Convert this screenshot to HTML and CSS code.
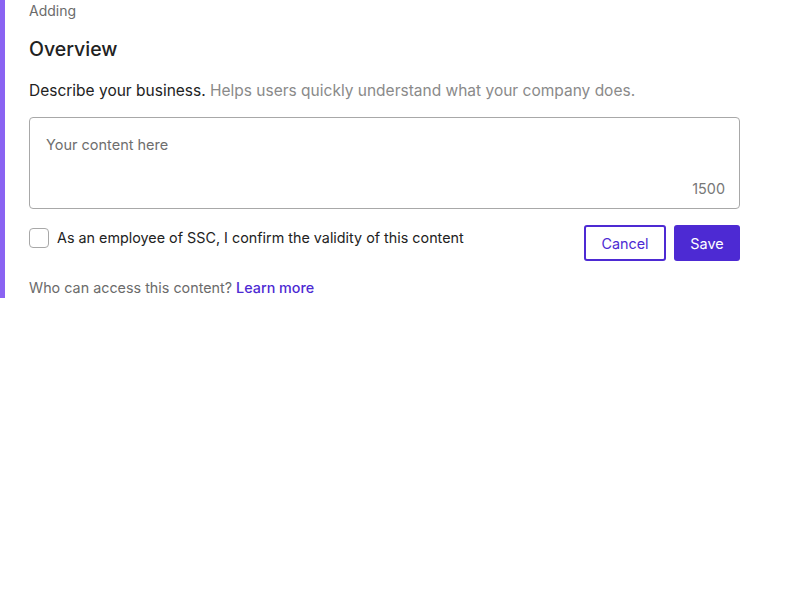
FILE: index.html
```html
<!DOCTYPE html>
<html>
<head>
<meta charset="utf-8">
<link rel="stylesheet" href="styles.css">
</head>
<body>
<div class="panel">
  <div class="status">Adding</div>
  <h2 class="title">Overview</h2>
  <p class="desc"><span class="desc-main">Describe your business.</span> <span class="desc-help">Helps users quickly understand what your company does.</span></p>
  <div class="field">
    <div class="placeholder">Your content here</div>
    <div class="counter">1500</div>
  </div>
  <div class="actions">
    <label class="confirm"><span class="box"></span><span>As an employee of SSC, I confirm the validity of this content</span></label>
    <div class="buttons">
      <button class="btn btn-outline">Cancel</button>
      <button class="btn btn-primary">Save</button>
    </div>
  </div>
  <p class="access">Who can access this content? <a class="link">Learn more</a></p>
</div>
</body>
</html>
```
FILE: styles.css
```css
html, body { margin: 0; padding: 0; background: #fff; }
body { font-family: Inter, "Noto Sans", sans-serif; color: #222; }
.panel {
  width: 711px;
  border-left: 5px solid #8a63f2;
  padding: 1px 0 0 24px;
  display: flex;
  flex-direction: column;
}
.status { font-size: 14px; line-height: 20px; color: #6b6b6b; }
.title { margin: 14px 0 0; font-size: 19.5px; line-height: 28px; font-weight: 500; color: #222; }
.desc { margin: 16px 0 0; font-size: 15.5px; line-height: 24px; }
.desc-main { color: #222; }
.desc-help { color: #8a8a8a; }
.field {
  margin-top: 14px;
  height: 92px;
  box-sizing: border-box;
  border: 1px solid #a8a8a8;
  border-radius: 4px;
  padding: 17px 14px 0 16px;
  display: flex;
  flex-direction: column;
}
.placeholder { font-size: 14.5px; line-height: 20px; color: #6e6e6e; }
.counter { margin-top: 24px; align-self: flex-end; font-size: 14.4px; line-height: 20px; color: #777; }
.actions { margin-top: 16px; display: flex; justify-content: space-between; align-items: flex-start; }
.confirm { display: flex; align-items: center; gap: 8px; font-size: 14.35px; line-height: 20px; color: #222; margin-top: 3px; }
.box { width: 20px; height: 20px; box-sizing: border-box; border: 1px solid #a8a8a8; border-radius: 4px; }
.buttons { display: flex; gap: 8px; }
.btn { font-family: inherit; font-size: 14.4px; height: 36px; border-radius: 3px; box-sizing: border-box; padding: 0; }
.btn-outline { width: 82px; background: #fff; border: 2px solid #4d2ad3; color: #4d2ad3; }
.btn-primary { width: 66px; background: #4d2ad3; border: none; color: #fff; }
.access { margin: 17px 0 0; font-size: 14.35px; line-height: 20px; color: #6b6b6b; }
.link { color: #4d2ad3; font-weight: 500; }
```
